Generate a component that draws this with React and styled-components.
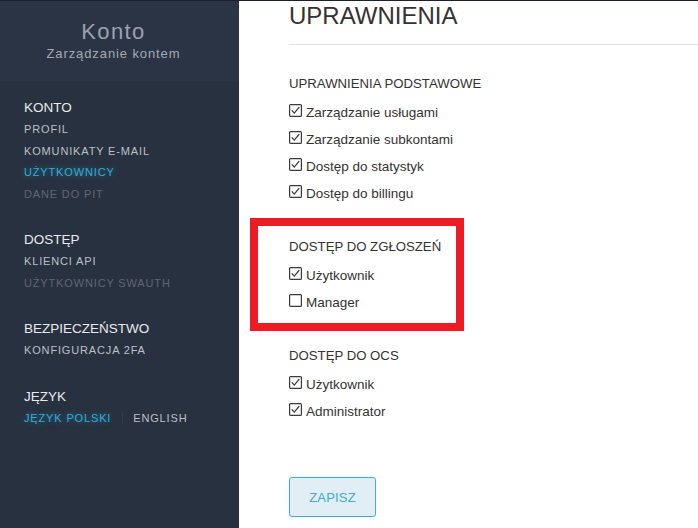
import styled, { createGlobalStyle } from 'styled-components';

const GlobalStyle = createGlobalStyle`
  html, body {
    margin: 0;
    padding: 0;
    background: #fff;
  }
  body {
    font-family: 'Liberation Sans', Arial, sans-serif;
  }
  *, *::before, *::after {
    box-sizing: border-box;
  }
`;

const COLORS = {
  side: '#28313f',
  sideHead: '#2b3444',
  active: '#2eaedc',
  text: '#333',
  red: '#ed1c24',
};

const Layout = styled.div`
  display: flex;
  min-height: 100vh;
  border-top: 1px solid #1c2029;
`;

const Sidebar = styled.aside`
  width: 239px;
  flex-shrink: 0;
  background: ${COLORS.side};
`;

const SideHeader = styled.div`
  height: 80px;
  padding: 17px 12px 0 0;
  background: ${COLORS.sideHead};
  text-align: center;
`;

const SideTitle = styled.div`
  font-size: 22px;
  line-height: 28px;
  letter-spacing: 1.4px;
  color: #9aa2ad;
`;

const SideSubtitle = styled.div`
  font-size: 13px;
  line-height: 16px;
  letter-spacing: 0.9px;
  color: #a3aab4;
`;

const Nav = styled.nav`
  padding: 15px 0 0 24px;
`;

const Group = styled.div`
  margin-bottom: 23px;
`;

const GroupTitle = styled.div`
  font-size: 13.5px;
  line-height: 23px;
  color: #e8eaed;
`;

const NavItem = styled.div`
  display: flex;
  align-items: center;
  font-size: 11px;
  line-height: 21.5px;
  letter-spacing: 0.85px;
  color: ${(p) => (p.$active ? COLORS.active : p.$muted ? '#5f6775' : '#bcc0c6')};
  text-shadow: ${(p) => (p.$active ? '0 0 6px rgba(46, 174, 220, 0.55)' : 'none')};
`;

const LangLink = styled.span`
  color: ${(p) => (p.$active ? COLORS.active : '#bcc0c6')};
  text-shadow: ${(p) => (p.$active ? '0 0 6px rgba(46, 174, 220, 0.55)' : 'none')};
`;

const Sep = styled.span`
  width: 1px;
  height: 12px;
  margin: 0 10px 0 11px;
  background: #343d4b;
`;

const Main = styled.main`
  flex: 1;
  padding-left: 50px;
`;

const Title = styled.h1`
  margin: 3px 0 0;
  padding-bottom: 16px;
  border-bottom: 1px solid #e3e3e3;
  font-size: 24px;
  line-height: 24px;
  font-weight: 400;
  color: ${COLORS.text};
`;

const Section = styled.section`
  position: relative;
  margin-top: ${(p) => (p.$first ? '29px' : '30px')};

  &::before {
    content: '';
    display: ${(p) => (p.$highlight ? 'block' : 'none')};
    position: absolute;
    left: -39px;
    top: -19px;
    width: 214px;
    height: 113px;
    border: 8px solid ${COLORS.red};
    pointer-events: none;
  }
`;

const SectionTitle = styled.h2`
  margin: 0 0 5px;
  font-size: 13.2px;
  line-height: 20px;
  font-weight: 400;
  color: ${COLORS.text};
`;

const Row = styled.label`
  display: flex;
  align-items: flex-start;
  height: 27px;
  font-size: 13.5px;
  line-height: 27px;
  color: ${COLORS.text};

  svg {
    flex-shrink: 0;
    margin: 5px 4px 0 0;
  }
`;

const SaveButton = styled.button`
  margin-top: 52px;
  width: 87px;
  height: 40px;
  border: 1px solid #3aafd9;
  border-radius: 3px;
  background: #e1eef5;
  color: #39acd6;
  font-family: 'Liberation Sans', Arial, sans-serif;
  font-size: 13px;
  letter-spacing: 0.2px;
  cursor: pointer;
`;

function Checkbox({ checked }) {
  return (
    <svg width="13" height="13" viewBox="0 0 13 13">
      <rect x="0.6" y="0.6" width="11.8" height="11.8" rx="1" fill="#fff" stroke="#3a3a3a" strokeWidth="1.2" />
      {checked && (
        <path d="M2.8 6.4 L5.3 9.1 L10.2 3.2" fill="none" stroke="#3a3a3a" strokeWidth="1.3" />
      )}
    </svg>
  );
}

const sections = [
  {
    title: 'UPRAWNIENIA PODSTAWOWE',
    items: [
      ['Zarządzanie usługami', true],
      ['Zarządzanie subkontami', true],
      ['Dostęp do statystyk', true],
      ['Dostęp do billingu', true],
    ],
  },
  {
    title: 'DOSTĘP DO ZGŁOSZEŃ',
    highlight: true,
    items: [
      ['Użytkownik', true],
      ['Manager', false],
    ],
  },
  {
    title: 'DOSTĘP DO OCS',
    items: [
      ['Użytkownik', true],
      ['Administrator', true],
    ],
  },
];

export default function App() {
  return (
    <>
      <GlobalStyle />
      <Layout>
        <Sidebar>
          <SideHeader>
            <SideTitle>Konto</SideTitle>
            <SideSubtitle>Zarządzanie kontem</SideSubtitle>
          </SideHeader>
          <Nav>
            <Group>
              <GroupTitle>KONTO</GroupTitle>
              <NavItem>PROFIL</NavItem>
              <NavItem>KOMUNIKATY E-MAIL</NavItem>
              <NavItem $active>UŻYTKOWNICY</NavItem>
              <NavItem $muted>DANE DO PIT</NavItem>
            </Group>
            <Group>
              <GroupTitle>DOSTĘP</GroupTitle>
              <NavItem>KLIENCI API</NavItem>
              <NavItem $muted>UŻYTKOWNICY SWAUTH</NavItem>
            </Group>
            <Group>
              <GroupTitle>BEZPIECZEŃSTWO</GroupTitle>
              <NavItem>KONFIGURACJA 2FA</NavItem>
            </Group>
            <Group>
              <GroupTitle>JĘZYK</GroupTitle>
              <NavItem>
                <LangLink $active>JĘZYK POLSKI</LangLink>
                <Sep />
                <LangLink>ENGLISH</LangLink>
              </NavItem>
            </Group>
          </Nav>
        </Sidebar>
        <Main>
          <Title>UPRAWNIENIA</Title>
          {sections.map((s, i) => (
            <Section key={s.title} $first={i === 0} $highlight={s.highlight}>
              <SectionTitle>{s.title}</SectionTitle>
              {s.items.map(([label, checked]) => (
                <Row key={label}>
                  <Checkbox checked={checked} />
                  {label}
                </Row>
              ))}
            </Section>
          ))}
          <SaveButton>ZAPISZ</SaveButton>
        </Main>
      </Layout>
    </>
  );
}
